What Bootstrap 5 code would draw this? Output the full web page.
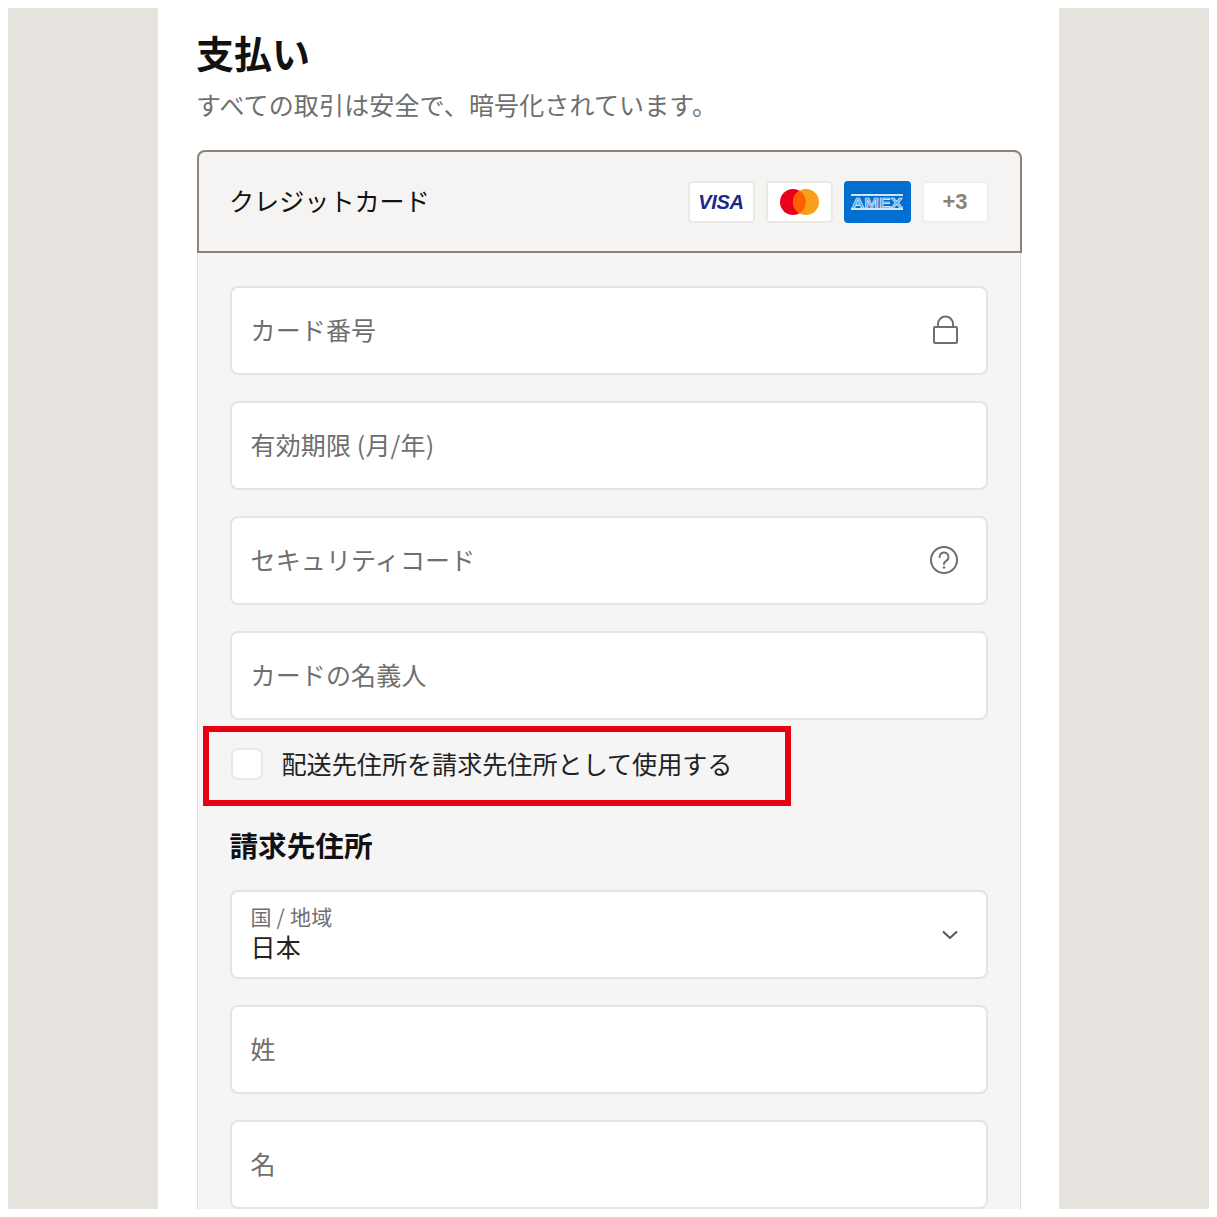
<!DOCTYPE html>
<html lang="ja">
<head>
<meta charset="utf-8">
<title>支払い</title>
<link rel="stylesheet" href="https://cdn.jsdelivr.net/npm/bootstrap@5.3.0/dist/css/bootstrap.min.css">
<style>
html,body{height:1217px;overflow:hidden;background:#fff}
body{font-family:"Noto Sans CJK JP","Liberation Sans",sans-serif;color:#111;padding:8px 8px 0 8px;position:relative}
.frame{height:1201px}
.side-panel{width:150px;background:#e6e3de;flex:none}
.main-col{width:901px;flex:none;padding:0 38px 0 39px;overflow:hidden}
.pay-title{font-size:38px;font-weight:700;line-height:48px;margin:20px 0 0 -1px}
.pay-sub{font-size:25px;line-height:36px;color:#6f6f6f;margin:10px 0 28px -1px;white-space:nowrap;letter-spacing:.15px}
.pay-box{width:824px;border:1.5px solid #dedede;border-top:0;border-radius:8px 8px 0 0;background:#f5f5f5;height:1200px}
.pay-head{height:103px;margin:0 -1.5px;background:#f5f4f2;border:2px solid #8d8374;border-radius:8px 8px 0 0;padding:0 31px 0 30.5px}
.pay-head-label{font-size:25.1px;line-height:36px;margin-bottom:3px}
.brand-row{column-gap:11px}
.brand-chip{width:67px;height:42px;background:#fff;border:2px solid #ebe9e5;border-radius:4px}
.brand-amex{background:#016fd0;border-color:#016fd0}
.brand-more{border-color:#f0efec;color:#8d8374;font-size:22px;font-weight:700;font-family:"Liberation Sans",sans-serif}
.pay-body{padding:32.5px 32.5px 0 31.5px}
.pay-field{height:89px;background:#fff;border:2px solid #e4e4e4;border-radius:8px;padding:0 19px;margin-bottom:26px;font-size:25px;letter-spacing:.15px;color:#6f6f6f}
.pay-field-last{margin-bottom:0}
.pay-select{padding-bottom:2px}
.pay-check{height:88px;padding-left:1px}
.check-square{width:32px;height:32px;background:#fff;border:2px solid #e8e8e8;border-radius:7px;margin-right:19px;flex:none}
.check-label{font-size:25.1px;line-height:36px;color:#222;margin-bottom:2px}
.bill-title{font-size:28.6px;font-weight:700;line-height:40px;margin:17.5px 0 24.5px}
.sel-small{font-size:21px;line-height:26px;color:#6f6f6f;letter-spacing:.2px}
.sel-value{font-size:25px;line-height:34px;color:#222}
.icon-lock{margin-right:9px}
.icon-help{margin-right:8px}
.icon-chev{margin:4px 8px 0 0}
.red-outline{position:absolute;left:203px;top:726px;width:588px;height:80px;border:6px solid #e60012;pointer-events:none}
</style>
</head>
<body>
<div class="frame d-flex">
  <div class="side-panel"></div>
  <div class="main-col">
    <h1 class="pay-title">支払い</h1>
    <p class="pay-sub">すべての取引は安全で、暗号化されています。</p>
    <div class="pay-box">
      <div class="pay-head d-flex align-items-center justify-content-between">
        <span class="pay-head-label">クレジットカード</span>
        <div class="d-flex brand-row">
          <div class="brand-chip d-flex align-items-center justify-content-center">
            <svg width="56" height="20" viewBox="0 0 56 20"><text x="28" y="17" text-anchor="middle" font-family="Liberation Sans" font-size="20" font-style="italic" font-weight="700" fill="#1a2a8c" letter-spacing="-.3">VISA</text></svg>
          </div>
          <div class="brand-chip d-flex align-items-center justify-content-center">
            <svg width="39" height="26" viewBox="0 0 39 26"><circle cx="13" cy="13" r="13" fill="#eb001b"/><circle cx="26" cy="13" r="13" fill="#f79e1b"/><path d="M19.500 1.800a13 13 0 0 1 0 22.400a13 13 0 0 1 0-22.400z" fill="#ff5f00"/></svg>
          </div>
          <div class="brand-chip brand-amex d-flex align-items-center justify-content-center">
            <svg width="54" height="16" viewBox="0 0 54 16"><rect x="0" y="0" width="54" height="16" fill="#016fd0"/><path d="M1 1h52M1 15h52" stroke="#cfe3f6" stroke-width="2"/><text x="27" y="14" text-anchor="middle" font-family="Liberation Sans" font-size="15.500" font-weight="700" fill="#5b9fe0" stroke="#eaf3fb" stroke-width=".6" textLength="51" lengthAdjust="spacingAndGlyphs">AMEX</text></svg>
          </div>
          <div class="brand-chip brand-more d-flex align-items-center justify-content-center">+3</div>
        </div>
      </div>
      <div class="pay-body">
        <div class="pay-field d-flex align-items-center justify-content-between">
          <span>カード番号</span>
          <svg width="26" height="30" viewBox="0 0 26 30" fill="none" stroke="#6f6f6f" stroke-width="2" class="icon-lock"><rect x="2" y="12" width="23" height="16" rx="1"/><path d="M6 12V9a7.500 7.500 0 0 1 15 0v3"/></svg>
        </div>
        <div class="pay-field d-flex align-items-center">有効期限 (月/年)</div>
        <div class="pay-field d-flex align-items-center justify-content-between">
          <span>セキュリティコード</span>
          <svg width="30" height="30" viewBox="0 0 30 30" fill="none" stroke="#6f6f6f" stroke-width="2" class="icon-help"><circle cx="15" cy="15" r="13"/><path d="M10.500 12a4.500 4.500 0 1 1 7 3.700c-1.500 1-2.500 1.800-2.500 3.300" stroke-linecap="round"/><circle cx="15" cy="22.500" r="1.300" fill="#6f6f6f" stroke="none"/></svg>
        </div>
        <div class="pay-field pay-field-last d-flex align-items-center">カードの名義人</div>
        <div class="pay-check d-flex align-items-center">
          <span class="check-square"></span>
          <span class="check-label">配送先住所を請求先住所として使用する</span>
        </div>
        <h2 class="bill-title">請求先住所</h2>
        <div class="pay-field pay-select d-flex align-items-center justify-content-between">
          <div>
            <div class="sel-small">国 / 地域</div>
            <div class="sel-value">日本</div>
          </div>
          <svg width="18" height="10" viewBox="0 0 18 10" fill="none" stroke="#555" stroke-width="2" class="icon-chev"><path d="M2 1.500l7 6.500 7-6.500"/></svg>
        </div>
        <div class="pay-field d-flex align-items-center">姓</div>
        <div class="pay-field d-flex align-items-center">名</div>
      </div>
    </div>
  </div>
  <div class="side-panel"></div>
</div>
<div class="red-outline"></div>
<script src="https://cdn.jsdelivr.net/npm/bootstrap@5.3.0/dist/js/bootstrap.bundle.min.js"></script>
</body>
</html>
